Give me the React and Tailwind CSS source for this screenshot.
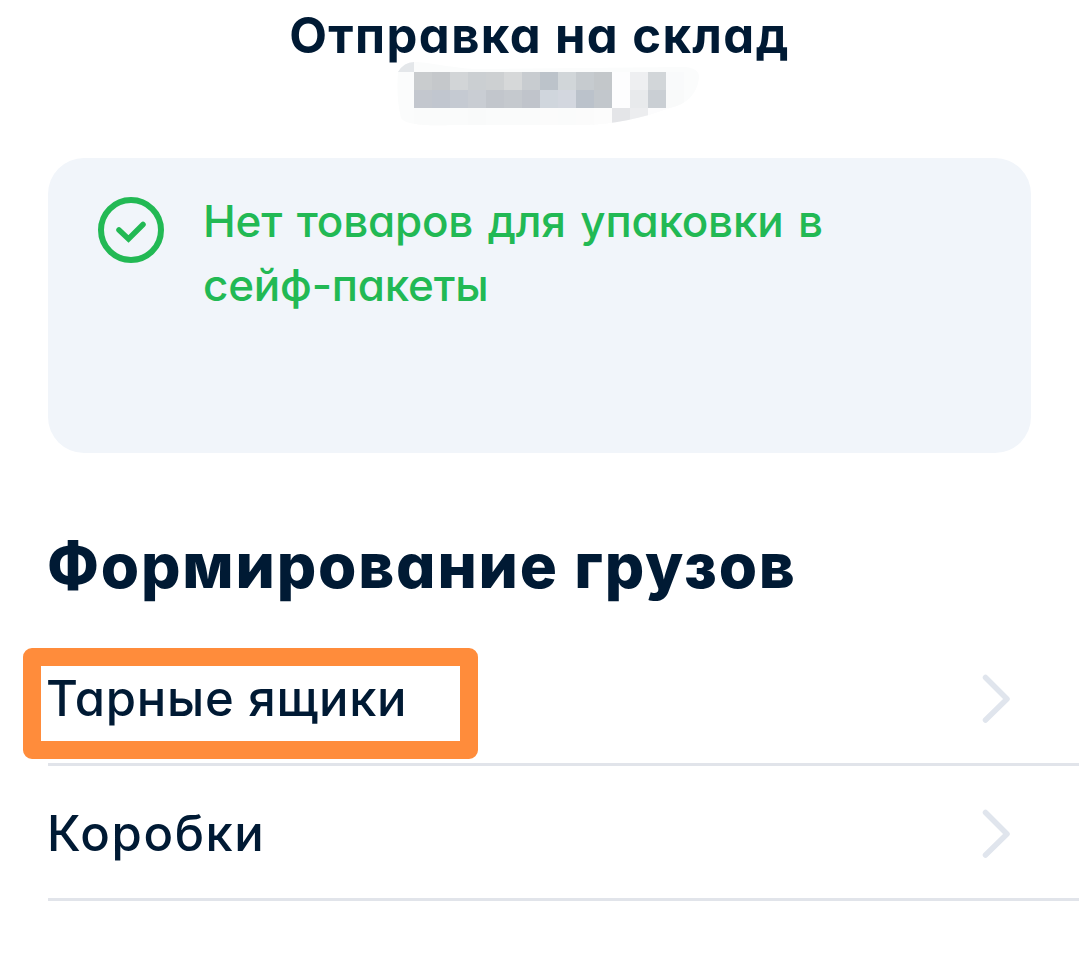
import React from "react";

const hiddenRows = [
  ["#c9ccce", "#c5c8cb", "#d2d5d7", "#cbcfd2", "#cdd0d2", "#d6d8d9", "#c8ccd0", "#bcc3ca", "#d1d6d9", "#c6cbcf", "#c3c7ca", "#fdfdfe", "#eeeff1", "#d2d6d9", "#f9fafb"],
  ["#c3c7ce", "#c1c6cf", "#c5cad2", "#c9cdd3", "#c2c6cc", "#c5c9ce", "#c0c4cb", "#d0d6dd", "#d3d7df", "#bbc2cb", "#c2c7cc", "#fdfdfe", "#e8eaec", "#cacfd4", "#f9fafa"],
  ["#fafbfb", "#fafbfb", "#fafbfb", "#f9fafa", "#fafbfb", "#fafbfb", "#fafbfb", "#fbfbfb", "#fafbfb", "#fbfbfb", "#fcfcfc", "#e4e5e8", "#ecedef", "#fcfcfd", "#fdfdfe"],
];

const HiddenNumber = () => (
  <svg width="310" height="66" viewBox="0 0 310 66" shapeRendering="crispEdges">
    <clipPath id="smear">
      <path d="M4 12Q10 2 20 2C34 2 52 7 80 9L290 7Q306 8 305 18Q302 42 276 48C248 58 220 65 185 65L60 65Q12 67 7 58Q2 38 4 12Z" />
    </clipPath>
    <g clipPath="url(#smear)">
      <rect width="310" height="66" fill="#fbfcfc" />
      <rect width="20" height="12" fill="#e4e7ea" />
      {hiddenRows.map((row, y) =>
        row.map((fill, x) => (
          <rect key={`${x}-${y}`} x={20 + x * 18} y={12 + y * 18} width="18" height="18" fill={fill} />
        ))
      )}
    </g>
  </svg>
);

const CheckCircle = () => (
  <svg width="68" height="68" viewBox="0 0 68 68" fill="none" stroke="currentColor" className="shrink-0">
    <circle cx="34" cy="34" r="30" strokeWidth="6" />
    <path d="M22 34L31.5 43L46 28.5" strokeWidth="5.5" strokeLinecap="round" strokeLinejoin="miter" />
  </svg>
);

const Chevron = () => (
  <svg width="30" height="50" viewBox="0 0 30 50" fill="none" stroke="#e0e5ed" strokeWidth="5.5" strokeLinecap="round" strokeLinejoin="round">
    <path d="M3.5 3.5L25 25L3.5 46" />
  </svg>
);

const CargoRow = ({ title, textClass, marked }) => (
  <button className="relative flex h-[135px] w-full items-center justify-between border-b-3 border-[#e1e4ea] pr-[67px] pt-[3px] text-left">
    <span className={`whitespace-nowrap text-[49px] font-medium leading-[60px] ${textClass}`}>{title}</span>
    <Chevron />
    {marked && (
      <span className="absolute -left-[25px] top-[17px] h-[111px] w-[455px] rounded-[9px] border-[18px] border-[#ff8c3b]" />
    )}
  </button>
);

const App = () => {
  return (
    <div className="h-[960px] w-full overflow-hidden bg-white font-['Inter','Noto_Sans',sans-serif] text-[#001a34] [font-feature-settings:'cv11']">
      <header className="flex h-[158px] flex-col items-center">
        <h1 className="mt-[6px] h-[56px] whitespace-nowrap text-[49px] font-bold leading-[60px] tracking-[1.4px]">Отправка на склад</h1>
        <div className="ml-[19px] -mt-[2px]">
          <HiddenNumber />
        </div>
      </header>

      <section className="ml-12 flex h-[295px] w-[983px] items-start gap-[38px] rounded-[36px] bg-[#f1f5fa] pl-[49px] pt-[31px] text-[#22b954]">
        <div className="pt-[7px]">
          <CheckCircle />
        </div>
        <p className="whitespace-nowrap text-[44px] font-medium leading-[64px] tracking-[-0.2px] [word-spacing:3px]">
          <span className="block">Нет товаров для упаковки в</span>
          <span className="block">сейф-пакеты</span>
        </p>
      </section>

      <h2 className="ml-[47px] mt-[77px] h-[101px] whitespace-nowrap text-[62px] font-extrabold leading-[72px] tracking-[1.8px]">Формирование грузов</h2>

      <div className="ml-12">
        <CargoRow title="Тарные ящики" textClass="-ml-[2px] tracking-[0.7px]" marked />
        <CargoRow title="Коробки" textClass="-ml-px tracking-[1.6px]" />
      </div>
    </div>
  );
};

export default App;
